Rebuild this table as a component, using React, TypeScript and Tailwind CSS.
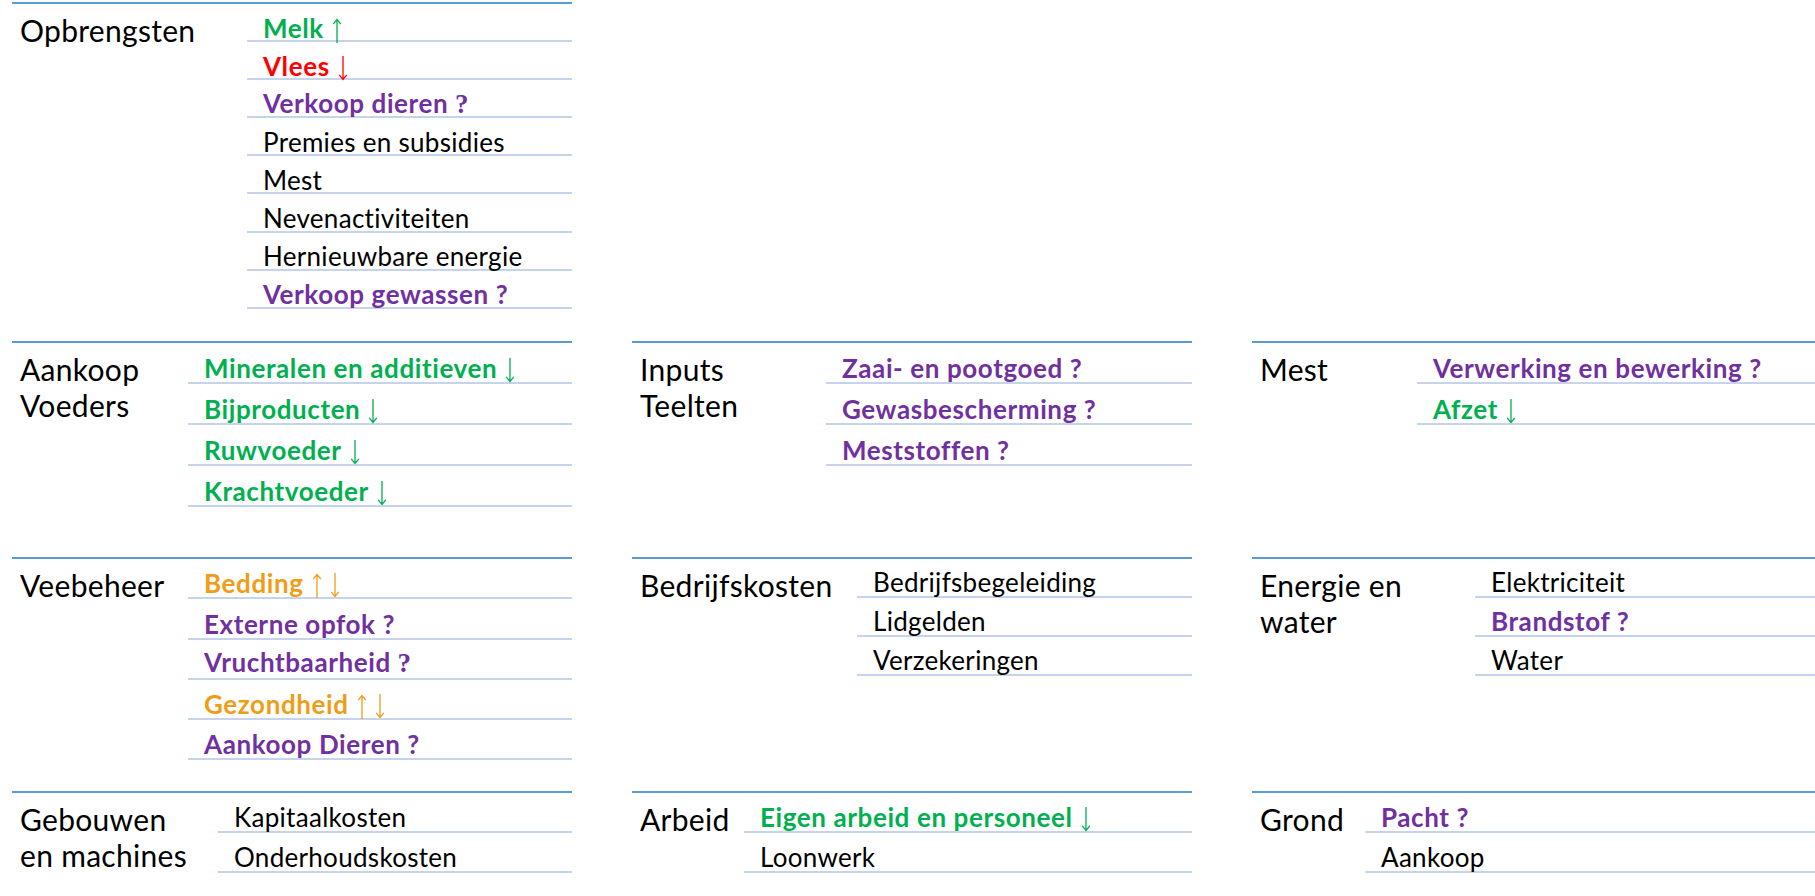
type Mark = "up" | "down" | "both" | undefined

type Item = {
  text: string
  tone?: string
  mark?: Mark
  // "?" drawn in the serif face, as in the slide
  serifQ?: boolean
}

type Block = {
  title: string[]
  headW: string
  rowH: string
  // how the text sits on its rule
  textFit: string
  items: Item[]
}

const PLAIN = "tracking-[0.3px]"
const GREEN = "text-[#00b050] font-bold tracking-[0.6px]"
const RED = "text-[#ff0000] font-bold tracking-[0.6px]"
const PURPLE = "text-[#7030a0] font-bold tracking-[0.6px]"
const ORANGE = "text-[#ef9d17] font-bold tracking-[0.6px]"

const TIGHT = "leading-[0.9]"
const LOOSE = "leading-none pb-[1px]"

function ArrowUp() {
  return (
    <svg
      width="12"
      height="25"
      viewBox="0 0 12 25"
      fill="none"
      stroke="currentColor"
      strokeWidth="1.3"
      className="relative top-[5px] inline-block"
    >
      <path d="M6 1.5V25M2.2 6.2L6 1.5l3.8 4.7" />
    </svg>
  )
}

function ArrowDown() {
  return (
    <svg
      width="12"
      height="25"
      viewBox="0 0 12 25"
      fill="none"
      stroke="currentColor"
      strokeWidth="1.3"
      className="relative top-[5px] inline-block"
    >
      <path d="M6 0V23.5M2.2 18.8L6 23.5l3.8-4.7" />
    </svg>
  )
}

function Marks({ mark }: { mark: Mark }) {
  if (!mark) return null
  return (
    <span className="ml-[7px] inline-flex items-baseline gap-[6px]">
      {(mark === "up" || mark === "both") && <ArrowUp />}
      {(mark === "down" || mark === "both") && <ArrowDown />}
    </span>
  )
}

function Row({ item, block }: { item: Item; block: Block }) {
  const text = item.serifQ ? item.text.replace(/ \?$/, "") : item.text
  return (
    <div className={`${block.rowH} flex items-end border-b-2 border-[#c5d4ea] pl-[16px]`}>
      <span className={`whitespace-nowrap text-[26px] ${block.textFit} ${item.tone ?? PLAIN}`}>
        {text}
        {item.serifQ && (
          <span className="font-['Liberation_Serif',serif] text-[27px] tracking-normal"> ?</span>
        )}
        <Marks mark={item.mark} />
      </span>
    </div>
  )
}

function Section({ block }: { block: Block }) {
  return (
    <div className="flex items-start border-t-2 border-[#5b9bd5]">
      <div
        className={`${block.headW} shrink-0 pl-[8px] pt-[8px] text-[30px] leading-[36px] tracking-[0.3px]`}
      >
        {block.title.map((line) => (
          <div key={line} className="whitespace-nowrap">
            {line}
          </div>
        ))}
      </div>
      <div className="flex-1">
        {block.items.map((item) => (
          <Row key={item.text} item={item} block={block} />
        ))}
      </div>
    </div>
  )
}

const opbrengsten: Block = {
  title: ["Opbrengsten"],
  headW: "w-[235px]",
  rowH: "h-[38.1px]",
  textFit: TIGHT,
  items: [
    { text: "Melk", tone: GREEN, mark: "up" },
    { text: "Vlees", tone: RED, mark: "down" },
    { text: "Verkoop dieren ?", tone: PURPLE, serifQ: true },
    { text: "Premies en subsidies" },
    { text: "Mest" },
    { text: "Nevenactiviteiten" },
    { text: "Hernieuwbare energie" },
    { text: "Verkoop gewassen ?", tone: PURPLE },
  ],
}

const aankoopVoeders: Block = {
  title: ["Aankoop", "Voeders"],
  headW: "w-[176px]",
  rowH: "h-[40.9px]",
  textFit: LOOSE,
  items: [
    { text: "Mineralen en additieven", tone: GREEN, mark: "down" },
    { text: "Bijproducten", tone: GREEN, mark: "down" },
    { text: "Ruwvoeder", tone: GREEN, mark: "down" },
    { text: "Krachtvoeder", tone: GREEN, mark: "down" },
  ],
}

const inputsTeelten: Block = {
  title: ["Inputs", "Teelten"],
  headW: "w-[194px]",
  rowH: "h-[40.9px]",
  textFit: LOOSE,
  items: [
    { text: "Zaai- en pootgoed ?", tone: PURPLE },
    { text: "Gewasbescherming ?", tone: PURPLE },
    { text: "Meststoffen ?", tone: PURPLE },
  ],
}

const mest: Block = {
  title: ["Mest"],
  headW: "w-[165px]",
  rowH: "h-[40.9px]",
  textFit: LOOSE,
  items: [
    { text: "Verwerking en bewerking ?", tone: PURPLE },
    { text: "Afzet", tone: GREEN, mark: "down" },
  ],
}

const veebeheer: Block = {
  title: ["Veebeheer"],
  headW: "w-[176px]",
  rowH: "h-[40.25px]",
  textFit: LOOSE,
  items: [
    { text: "Bedding", tone: ORANGE, mark: "both" },
    { text: "Externe opfok ?", tone: PURPLE },
    { text: "Vruchtbaarheid ?", tone: PURPLE, serifQ: true },
    { text: "Gezondheid", tone: ORANGE, mark: "both" },
    { text: "Aankoop Dieren ?", tone: PURPLE },
  ],
}

const bedrijfskosten: Block = {
  title: ["Bedrijfskosten"],
  headW: "w-[225px]",
  rowH: "h-[39px]",
  textFit: LOOSE,
  items: [{ text: "Bedrijfsbegeleiding" }, { text: "Lidgelden" }, { text: "Verzekeringen" }],
}

const energie: Block = {
  title: ["Energie en", "water"],
  headW: "w-[223px]",
  rowH: "h-[39px]",
  textFit: LOOSE,
  items: [{ text: "Elektriciteit" }, { text: "Brandstof ?", tone: PURPLE }, { text: "Water" }],
}

const gebouwen: Block = {
  title: ["Gebouwen", "en machines"],
  headW: "w-[206px]",
  rowH: "h-[40px]",
  textFit: LOOSE,
  items: [{ text: "Kapitaalkosten" }, { text: "Onderhoudskosten" }],
}

const arbeid: Block = {
  title: ["Arbeid"],
  headW: "w-[112px]",
  rowH: "h-[40px]",
  textFit: LOOSE,
  items: [{ text: "Eigen arbeid en personeel", tone: GREEN, mark: "down" }, { text: "Loonwerk" }],
}

const grond: Block = {
  title: ["Grond"],
  headW: "w-[113px]",
  rowH: "h-[40px]",
  textFit: LOOSE,
  items: [{ text: "Pacht ?", tone: PURPLE }, { text: "Aankoop" }],
}

export default function App() {
  return (
    <div className="h-[896px] w-[1815px] overflow-hidden bg-white font-['Lato',sans-serif] text-black">
      <div className="grid grid-cols-[560px_560px_563px] grid-rows-[339px_216px_234px_105px] gap-x-[60px] pl-[12px] pt-[2px]">
        <Section block={opbrengsten} />
        <div />
        <div />

        <Section block={aankoopVoeders} />
        <Section block={inputsTeelten} />
        <Section block={mest} />

        <Section block={veebeheer} />
        <Section block={bedrijfskosten} />
        <Section block={energie} />

        <Section block={gebouwen} />
        <Section block={arbeid} />
        <Section block={grond} />
      </div>
    </div>
  )
}
